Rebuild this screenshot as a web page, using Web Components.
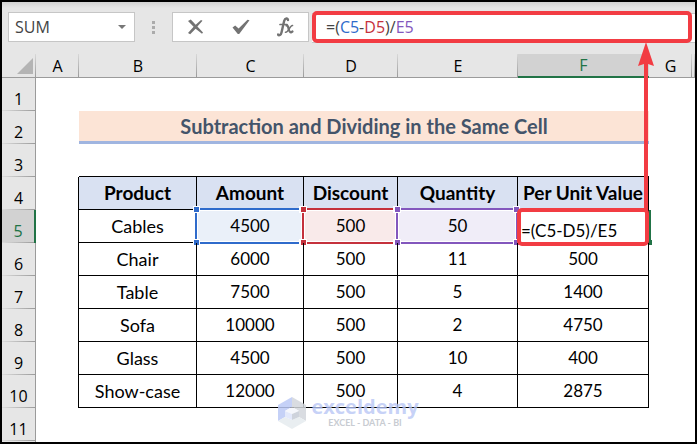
<!DOCTYPE html>
<html lang="en">
<head>
<meta charset="utf-8">
<meta name="viewport" content="width=device-width, initial-scale=1">
<title>Subtraction and Dividing in the Same Cell</title>
<style>
  body {
    margin: 0;
    font-family: "Open Sans", "Noto Sans", sans-serif;
    font-size: 16px;
    color: #000;
  }
</style>
</head>
<body>
<sheet-window>
  <sheet-toolbar slot="toolbar">
    <name-box value="SUM"></name-box>
    <edit-actions></edit-actions>
    <formula-bar>=(<span style="color:#2f6bcb">C5</span>-<span style="color:#c5313c">D5</span>)/<span style="color:#8357bd">E5</span></formula-bar>
  </sheet-toolbar>
  <sheet-grid></sheet-grid>
  <water-mark slot="mark"></water-mark>
</sheet-window>

<script>
class SheetWindow extends HTMLElement {
  constructor() {
    super();
    this.attachShadow({ mode: "open" });
    this.shadowRoot.innerHTML = `
      <style>
        :host {
          display: flex;
          flex-direction: column;
          position: relative;
          box-sizing: border-box;
          min-height: 100vh;
          border: 2px solid #000;
          background: #fff;
        }

        .rest {
          flex: 1;
          background: linear-gradient(to right, #e6e6e6 33px, #9b9b9b 33px, #9b9b9b 34px, #fff 34px);
        }
      </style>

      <slot name="toolbar"></slot>
      <slot></slot>
      <div class="rest"></div>
      <slot name="mark"></slot>
    `;
  }
}

class SheetToolbar extends HTMLElement {
  constructor() {
    super();
    this.attachShadow({ mode: "open" });
    this.shadowRoot.innerHTML = `
      <style>
        :host {
          display: flex;
          align-items: center;
          height: 52px;
          box-sizing: border-box;
          padding: 0 0 2px 6px;
          background: linear-gradient(#d2d2d2, #e6e6e6 6px);
        }
      </style>

      <slot></slot>
    `;
  }
}

class NameBox extends HTMLElement {
  constructor() {
    super();
    this.attachShadow({ mode: "open" });
    this.shadowRoot.innerHTML = `
      <style>
        :host {
          display: flex;
          box-sizing: border-box;
          width: 127px;
          height: 30px;
          border: 1px solid #c6c6c6;
          background: #fff;
        }

        input {
          flex: 1;
          min-width: 0;
          padding: 0 0 0 6px;
          border: 0;
          background: none;
          font: inherit;
          color: #444;
          outline: none;
        }

        button {
          display: flex;
          align-items: center;
          justify-content: center;
          width: 24px;
          padding: 0;
          border: 0;
          background: none;
        }
      </style>

      <input type="text" aria-label="Name box">
      <button type="button" aria-label="Show names">
        <svg width="8" height="4"><path d="M0 0h8L4 4z" fill="#777"/></svg>
      </button>
    `;
  }

  connectedCallback() {
    this.shadowRoot.querySelector("input").value = this.getAttribute("value");
  }
}

class EditActions extends HTMLElement {
  constructor() {
    super();
    this.attachShadow({ mode: "open" });
    this.shadowRoot.innerHTML = `
      <style>
        :host {
          display: flex;
          align-items: center;
        }

        .grip {
          width: 37px;
          display: flex;
          justify-content: center;
        }

        .box {
          display: flex;
          box-sizing: border-box;
          width: 137px;
          height: 30px;
          border: 1px solid #c6c6c6;
          background: #fff;
        }

        button {
          flex: 1;
          display: flex;
          align-items: center;
          justify-content: center;
          padding: 0;
          border: 0;
          background: none;
        }
      </style>

      <div class="grip">
        <svg width="3" height="13" fill="#ababab"><path d="M0 0h3v3H0zM0 5h3v3H0zM0 10h3v3H0z"/></svg>
      </div>
      <div class="box">
        <button type="button" aria-label="Cancel">
          <svg width="17" height="16" viewBox="0 0 17 16">
            <path d="M1 2 3.800 .6 8.700 5.800 14 1 15.500 1.800 10.400 7.600 16 13.600 15 14.800 8.600 9.700 3.200 15.200 1 14 6.600 7.800z" fill="#737373"/>
          </svg>
        </button>
        <button type="button" aria-label="Enter">
          <svg width="18" height="16" viewBox="0 0 18 16">
            <path d="M0.500 8.500 3.200 6.500 6.600 9.600 15.500 .8 17.500 1.300 7.200 15 5.800 15z" fill="#737373"/>
          </svg>
        </button>
        <button type="button" aria-label="Insert function">
          <svg width="18" height="20" viewBox="0 0 18 20" fill="none" stroke="#737373" stroke-linecap="round">
            <path d="M11 3C11 .8 8 .8 7.200 3.800L4.500 15.500C4 18 2 19 1 17.500" stroke-width="2.400"/>
            <path d="M3 7.500h7" stroke-width="1.700"/>
            <path d="M9.500 8.600C12 7.500 11 15.500 14 15.500L15.500 14.500" stroke-width="2.200"/>
            <path d="M15.500 8.500C13 8 11.500 15.800 8.500 15.300" stroke-width="1.600"/>
          </svg>
        </button>
      </div>
    `;
  }
}

class FormulaBar extends HTMLElement {
  constructor() {
    super();
    this.attachShadow({ mode: "open" });
    this.shadowRoot.innerHTML = `
      <style>
        :host {
          display: flex;
          flex: 1;
          min-width: 0;
          margin-left: 3px;
          box-sizing: border-box;
          height: 32px;
          padding-right: 3px;
          background: linear-gradient(#e6e6e6 2px, #c6c6c6 2px, #c6c6c6 3px, #fff 3px, #fff 31px, #c6c6c6 31px);
        }

        .field {
          flex: 1;
          display: flex;
          align-items: center;
          box-sizing: border-box;
          padding-left: 10px;
          border: 4px solid #f23c43;
          border-radius: 5px;
          background: #fff;
          color: #444;
          white-space: pre;
          outline: none;
        }
      </style>

      <div class="field" role="textbox" aria-label="Formula bar" contenteditable="true" spellcheck="false"><div><slot></slot></div></div>
    `;
  }
}

// Coloured frame with corner handles round a referenced cell
class RangeMark extends HTMLElement {
  constructor() {
    super();
    this.attachShadow({ mode: "open" });
    this.shadowRoot.innerHTML = `
      <style>
        :host {
          display: block;
          position: absolute;
          inset: -2px -1px -2px -2px;
          border: 2px solid var(--mark);
          box-shadow: inset 0 0 0 1px #fff;
          pointer-events: none;
        }

        i {
          position: absolute;
          width: 5px;
          height: 5px;
          background: var(--mark);
          border: 1px solid #fff;
        }

        .t { top: -4px; }
        .b { bottom: -4px; }
        .l { left: -4px; }
        .r { right: -4px; }
      </style>

      <i class="t l"></i><i class="t r"></i><i class="b l"></i><i class="b r"></i>
    `;
  }
}

// Red box round the edited cell, with the arrow up to the formula bar
class EditCallout extends HTMLElement {
  constructor() {
    super();
    this.attachShadow({ mode: "open" });
    this.shadowRoot.innerHTML = `
      <style>
        :host {
          display: block;
          position: absolute;
          inset: -2px -1px -4px -1px;
          border: 4px solid #f23c43;
          border-radius: 5px;
          pointer-events: none;
        }

        .green {
          position: absolute;
          right: -6px;
          top: -2px;
          bottom: -1px;
          width: 2px;
          background: #217346;
        }

        .knob {
          position: absolute;
          right: -7px;
          bottom: -3px;
          width: 3px;
          height: 5px;
          background: #217346;
        }

        svg {
          position: absolute;
          right: -9px;
          bottom: 100%;
        }
      </style>

      <div class="green"></div>
      <div class="knob"></div>
      <svg width="16" height="170" viewBox="0 0 16 170">
        <path d="M8 0 16 24 10 22V170H6V22L0 24z" fill="#f23c43"/>
      </svg>
    `;
  }
}

class WaterMark extends HTMLElement {
  constructor() {
    super();
    this.attachShadow({ mode: "open" });
    this.shadowRoot.innerHTML = `
      <style>
        :host {
          display: flex;
          position: absolute;
          left: 0;
          right: 0;
          bottom: 13px;
          align-items: center;
          justify-content: center;
          gap: 5px;
          font-family: "Open Sans", sans-serif;
          pointer-events: none;
        }

        .words {
          display: flex;
          flex-direction: column;
          align-items: center;
        }

        .name {
          font-size: 20px;
          line-height: 20px;
          font-weight: 700;
          color: rgba(184, 198, 245, 0.8);
        }

        .tag {
          font-family: Lato, sans-serif;
          font-size: 9px;
          line-height: 12px;
          font-weight: 700;
          color: #c8ccd2;
          white-space: pre;
        }
      </style>

      <svg width="28" height="32" viewBox="0 0 28 32" opacity="0.85">
        <path d="M14 0V10L7 14V20L0 24V8z" fill="#bccaf6"/>
        <path d="M14 0 28 8V24L21 20V14L14 10z" fill="#d3d7dc"/>
        <path d="M0 24 7 20 14 23 21 20 28 24 14 32z" fill="#e6ecef"/>
        <path d="M14 10 21 14 14 17 7 14z" fill="#f4f6fc"/>
        <path d="M7 14 14 17V23L7 20z" fill="#dfe6fb"/>
        <path d="M21 14 14 17V23L21 20z" fill="#c6ccd6"/>
      </svg>
      <div class="words">
        <div class="name">exceldemy</div>
        <div class="tag">EXCEL - DATA - BI</div>
      </div>
    `;
  }
}

class SheetGrid extends HTMLElement {
  constructor() {
    super();
    this.attachShadow({ mode: "open" });
    this.shadowRoot.innerHTML = `
      <style>
        :host {
          display: block;
        }

        table {
          width: 100%;
          table-layout: fixed;
          border-collapse: separate;
          border-spacing: 0;
        }

        th, td {
          box-sizing: border-box;
          position: relative;
          padding: 0;
          text-align: center;
          white-space: nowrap;
        }

        thead th {
          height: 24px;
          font-weight: 400;
          line-height: 20px;
          border-bottom: 1px solid #9b9b9b;
          background: linear-gradient(#d8d8d8, #9b9b9b) right / 1px 100% no-repeat #e6e6e6;
        }

        thead th.on {
          color: #217346;
          background: #d2d2d2;
          border-bottom: 2px solid #217346;
        }

        thead svg {
          display: block;
          margin: 0 3px 0 auto;
        }

        tbody th {
          height: 33px;
          padding-top: 8px;
          font-weight: 400;
          line-height: 20px;
          border-right: 1px solid #9b9b9b;
          background: linear-gradient(to right, #dcdcdc, #9b9b9b) bottom / 100% 1px no-repeat #e6e6e6;
        }

        tbody th.on {
          color: #217346;
          background-color: #d2d2d2;
          border-right: 2px solid #217346;
        }

        td {
          font-family: Lato, sans-serif;
          font-size: 18px;
          line-height: 24px;
        }

        .title {
          font-size: 20px;
          font-weight: 700;
          color: #44546a;
          background: #fce4d6;
          border-bottom: 3px solid #a0b5e0;
        }

        .line-right { border-right: 1px solid #000; }
        .line-bottom { border-bottom: 1px solid #000; }

        .head {
          font-size: 19px;
          font-weight: 700;
          background: #d9e1f2;
        }

        .number { font-size: 17px; }

        .blue { --mark: #2f6bcb; background: #eaf0f9; }
        .red { --mark: #c5313c; background: #f9eaea; }
        .purple { --mark: #8357bd; background: #f0edf8; }

        td input {
          display: block;
          box-sizing: border-box;
          width: 100%;
          height: 32px;
          padding: 8px 0 0 3px;
          border: 0;
          background: #fff;
          font: inherit;
          font-size: 17px;
          color: #000;
          outline: none;
        }
      </style>

      <table>
        <colgroup></colgroup>
        <thead><tr></tr></thead>
        <tbody></tbody>
      </table>
    `;
  }

  connectedCallback() {
    const widths = [34, 43, 118, 107, 94, 120, 131, 43, 3];
    const letters = ["A", "B", "C", "D", "E", "F", "G", ""];
    const marks = ["", "blue", "red", "purple"];

    const data = [
      ["Product", "Amount", "Discount", "Quantity", "Per Unit Value"],
      ["Cables", 4500, 500, 50, "=(C5-D5)/E5"],
      ["Chair", 6000, 500, 11, 500],
      ["Table", 7500, 500, 5, 1400],
      ["Sofa", 10000, 500, 2, 4750],
      ["Glass", 4500, 500, 10, 400],
      ["Show-case", 12000, 500, 4, 2875],
    ];

    const root = this.shadowRoot;

    root.querySelector("colgroup").innerHTML = widths
      .map((w) => `<col style="width:${w}px">`)
      .join("");

    root.querySelector("thead tr").innerHTML =
      `<th><svg width="16" height="16"><path d="M16 0v16H0z" fill="#b4b4b4"/></svg></th>` +
      letters
        .map((l) => `<th scope="col"${l === "F" ? ' class="on"' : ""}>${l}</th>`)
        .join("");

    let rows = "";
    for (let n = 1; n <= 11; n++) {
      rows += `<tr><th scope="row"${n === 5 ? ' class="on"' : ""}>${n}</th>`;

      if (n === 2) {
        rows += `<td></td><td class="title" colspan="5">Subtraction and Dividing in the Same Cell</td><td></td><td></td>`;
      } else if (n === 3) {
        rows += `<td></td>` + `<td class="line-bottom"></td>`.repeat(5) + `<td></td><td></td>`;
      } else if (n >= 4 && n <= 10) {
        rows += `<td class="line-right"></td>`;
        data[n - 4].forEach((value, i) => {
          const names = ["line-right", "line-bottom"];
          let content = value;

          if (n === 4) names.push("head");
          if (typeof value === "number") names.push("number");
          if (n === 5 && marks[i]) {
            names.push(marks[i]);
            content += "<range-mark></range-mark>";
          }
          if (n === 5 && i === 4) {
            content = `<input type="text" aria-label="Cell F5" value="${value}"><edit-callout></edit-callout>`;
          }
          rows += `<td class="${names.join(" ")}">${content}</td>`;
        });
        rows += `<td></td><td></td>`;
      } else {
        rows += `<td></td>`.repeat(8);
      }
      rows += "</tr>";
    }
    root.querySelector("tbody").innerHTML = rows;
  }
}

customElements.define("sheet-window", SheetWindow);
customElements.define("sheet-toolbar", SheetToolbar);
customElements.define("name-box", NameBox);
customElements.define("edit-actions", EditActions);
customElements.define("formula-bar", FormulaBar);
customElements.define("range-mark", RangeMark);
customElements.define("edit-callout", EditCallout);
customElements.define("water-mark", WaterMark);
customElements.define("sheet-grid", SheetGrid);
</script>
</body>
</html>
